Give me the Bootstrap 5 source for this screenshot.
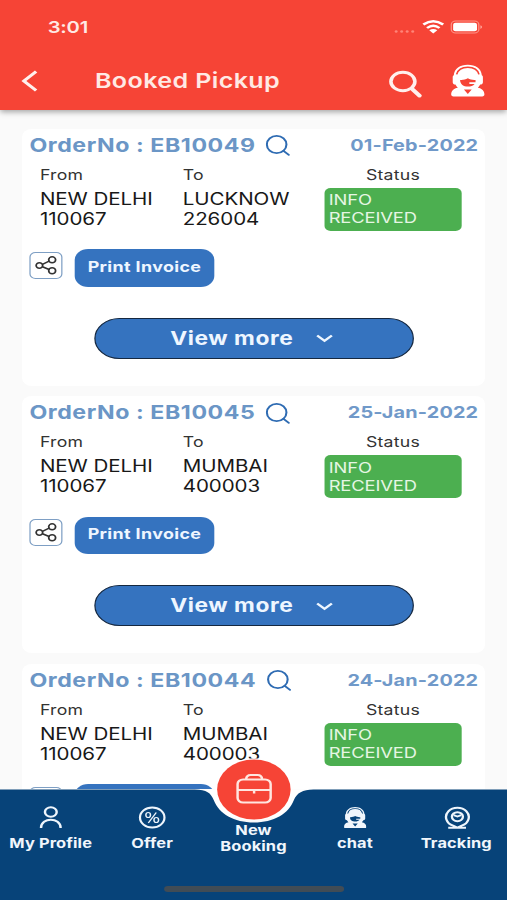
<!DOCTYPE html>
<html lang="en">
<head>
<meta charset="utf-8">
<meta name="viewport" content="width=device-width, initial-scale=1">
<title>Booked Pickup</title>
<link rel="stylesheet" href="https://cdn.jsdelivr.net/npm/bootstrap@5.3.0/dist/css/bootstrap.min.css">
<style>
html, body { height: 900px; overflow: hidden; }
body { font-family: Inter, "Liberation Sans", sans-serif; background: #fafafa; width: 507px; }
/* 414pt-wide layout stretched to the window width */
.phone { width: 414px; height: 900px; transform: scaleX(1.22464); transform-origin: 0 0; background: #fafafa; overflow: hidden; }
.topbar { height: 110px; background: #f64436; color: #ffe9e4; box-shadow: 0 2px 5px rgba(0,0,0,.35); z-index: 2; }
.statusline { height: 54px; padding: 0 19px 0 39px; }
.clock { font-size: 16.5px; font-weight: 600; letter-spacing: -.2px; }
.titleline { height: 56px; padding: 0 18px 0 17px; }
.titletext { font-size: 20.5px; font-weight: 600; margin-left: 45.500px; line-height: 53px; letter-spacing: .3px; }
.orders { padding: 18.5px 18px 0; gap: 10.5px; }
.order { height: 257px; background: #fff; border-radius: 8px; flex: none; }
.order-head { height: 33px; padding: 0 5.5px 0 6px; }
.order-no { font-size: 18.9px; font-weight: 650; color: #6b96c6; letter-spacing: .46px; line-height: 33px; }
.order-lens { margin-left: 8.500px; }
.order-date { font-size: 16.2px; font-weight: 650; color: #7099c9; letter-spacing: .13px; line-height: 33px; }
.route { height: 87.5px; padding-left: 14.6px; color: #181818; }
.from-col { width: 116.6px; }
.to-col { width: 116.2px; }
.stat-col { width: 112px; }
.cap { font-size: 14.4px; line-height: 26px; color: #333; letter-spacing: .2px; }
.place { font-size: 16.8px; line-height: 20px; letter-spacing: -.06px; margin-top: 1px; }
.state { background: #4caf50; color: #e6f6e4; border-radius: 5px; height: 43px; padding: 3.5px 3px 0; font-size: 15px; line-height: 18px; letter-spacing: -.1px; }
.stat-col .cap { margin-left: -1px; }
.actions { padding-left: 6px; gap: 10px; }
.share-btn { width: 27px; height: 27px; margin-top: 2.5px; border: 1px solid #7e9fc4; border-radius: 5px; background: #fff; }
.print-btn { width: 114px; height: 37.5px; border-radius: 11px; background: #3573bf; color: #eef6ff; font-size: 14.6px; font-weight: 700; letter-spacing: .3px; }
.more-btn { width: 261.5px; height: 41px; border: 1.2px solid #152840; border-radius: 21px; background: #3573bf; color: #eef6ff; font-size: 18.6px; font-weight: 700; letter-spacing: .45px; margin: 31px auto 0 58.5px; padding: 1.5px 4px 0 0; }
.more-chevron { margin-left: 18px; }
.tabs { height: 111px; color: #f1f6fc; z-index: 3; }
.tabs-shape { left: 0; top: -32px; }
.tab { width: 20%; font-size: 13.4px; font-weight: 700; letter-spacing: .1px; line-height: 16px; white-space: nowrap; }
.tab svg { display: block; margin: 16px auto 6px; }
.home-line { left: 134px; top: 96.5px; width: 147px; height: 6px; border-radius: 3px; background: #414c55; }
</style>
</head>
<body>
<svg width="0" height="0" class="position-absolute">
  <symbol id="lens" viewBox="0 0 20 24"><g fill="none" stroke="#2f6cb3" stroke-width="1.7" stroke-linecap="round"><ellipse cx="8.900" cy="11.500" rx="8" ry="8.700"/><path d="M14.500 17.800l4.300 4"/></g></symbol>
  <symbol id="share" viewBox="0 0 24 24"><g fill="none" stroke="#333" stroke-width="1.700"><circle cx="5" cy="12" r="3.200"/><circle cx="17.500" cy="5.500" r="3.400"/><circle cx="17.500" cy="18" r="3.400"/><path d="M8 10.700l6.500-3.800M8 13.400l6.500 3.200"/></g></symbol>
  <symbol id="agent" viewBox="0 0 28 34">
    <path fill="currentColor" d="M2.200 11.500C2.600 5 7.500 .8 14 .8s11.400 4.200 11.800 10.700c.9.500.9 1.500.9 2.700v4.500c0 1.500-1 2.300-2.300 2.500-.5 1.200-1.200 2.300-2 3.200C25.800 25.200 28 27.500 28 31.500c0 1.200-.7 1.900-1.900 1.900H1.900C.7 33.400 0 32.700 0 31.500c0-4 2.200-6.300 5.600-7.100-.8-.9-1.500-2-2-3.200-1.300-.2-2.300-1-2.300-2.500v-4.500c0-1.200 0-2.200.9-2.700z"/>
    <path fill="none" stroke="var(--cut)" stroke-width="1.400" d="M4.600 10.800C5.600 5.900 9 3.300 14 3.300s8.400 2.600 9.400 7.500"/>
    <path fill="var(--cut)" d="M7.500 16.500c2.600.2 4.500-.3 6.500-1.700 2 1.400 3.900 1.900 6.500 1.700v2.300h-5.200v1.700h4.400c-1.200 1.900-3.200 2.800-5.700 2.800-3.500 0-6.500-2.300-6.500-6.800zM10.700 26.300h6.600L14 30.800z"/>
  </symbol>
</svg>

<div class="phone d-flex flex-column">
  <header class="topbar flex-shrink-0 position-relative">
    <div class="statusline d-flex align-items-center justify-content-between">
      <span class="clock">3:01</span>
      <svg width="75" height="16" viewBox="0 0 75 16" fill="#fff">
        <g fill="#ff8578"><circle cx="3.500" cy="12.500" r="1.200"/><circle cx="8" cy="12.500" r="1.200"/><circle cx="12.500" cy="12.500" r="1.200"/><circle cx="17" cy="12.500" r="1.200"/></g>
        <g fill="none" stroke="#fff" stroke-width="2.300"><path d="M25.700 5.500q8.100-6.600 16.200 0"/><path d="M28.700 9q5.100-4.400 10.200 0"/></g>
        <path d="M30.500 11.300q3.300-2.600 6.600 0l-3.300 3.200z"/>
        <rect x="48.500" y="2" width="22.500" height="12" rx="3.500" fill="none" stroke="#ff9488"/>
        <rect x="50" y="3.700" width="19.500" height="8.600" rx="2"/><path fill="#ffaca1" d="M72.300 6.300q1.300.5 1.300 1.800t-1.300 1.800z"/>
      </svg>
    </div>
    <div class="titleline d-flex">
      <svg width="15" height="24" viewBox="0 0 15 24" class="mt-3 flex-shrink-0" fill="none" stroke="#fff0ed" stroke-width="2.800"><path d="M12.500 1.500L2.500 11l10 9.500"/></svg>
      <span class="titletext">Booked Pickup</span>
      <svg width="28" height="30" viewBox="0 0 28 30" class="ms-auto flex-shrink-0" style="margin-top:16px;margin-right:23.5px" fill="none" stroke="#fff0ed"><ellipse cx="12" cy="11.500" rx="9.800" ry="9.200" stroke-width="2.900"/><path stroke-width="3.600" stroke-linecap="round" d="M20 19.500l5.600 6.200"/></svg>
      <svg width="28" height="33" style="--cut:#f64436;margin-top:10px" class="flex-shrink-0 text-white"><use href="#agent"/></svg>
    </div>
  </header>

  <main class="orders d-flex flex-column flex-grow-1 overflow-hidden">
    <section class="order">
      <div class="order-head d-flex align-items-center">
        <span class="order-no">OrderNo : EB10049</span><svg width="20" height="24" class="order-lens"><use href="#lens"/></svg>
        <span class="order-date ms-auto">01-Feb-2022</span>
      </div>
      <div class="route d-flex">
        <div class="from-col"><div class="cap">From</div><div class="place">NEW DELHI<br>110067</div></div>
        <div class="to-col"><div class="cap">To</div><div class="place">LUCKNOW<br>226004</div></div>
        <div class="stat-col"><div class="cap text-center">Status</div><div class="state">INFO<br>RECEIVED</div></div>
      </div>
      <div class="actions d-flex">
        <div class="share-btn d-flex align-items-center justify-content-center"><svg width="20" height="21" viewBox="0 0 24 24" preserveAspectRatio="none"><use href="#share" width="24" height="24"/></svg></div>
        <button type="button" class="print-btn btn p-0 border-0">Print Invoice</button>
      </div>
      <button type="button" class="more-btn btn d-flex align-items-center justify-content-center">View more<svg width="14" height="9" viewBox="0 0 14 9" class="more-chevron" fill="none" stroke="currentColor" stroke-width="2.200"><path d="M1 1.500l6 5.300 6-5.300"/></svg></button>
    </section>
    <section class="order">
      <div class="order-head d-flex align-items-center">
        <span class="order-no">OrderNo : EB10045</span><svg width="20" height="24" class="order-lens"><use href="#lens"/></svg>
        <span class="order-date ms-auto">25-Jan-2022</span>
      </div>
      <div class="route d-flex">
        <div class="from-col"><div class="cap">From</div><div class="place">NEW DELHI<br>110067</div></div>
        <div class="to-col"><div class="cap">To</div><div class="place">MUMBAI<br>400003</div></div>
        <div class="stat-col"><div class="cap text-center">Status</div><div class="state">INFO<br>RECEIVED</div></div>
      </div>
      <div class="actions d-flex">
        <div class="share-btn d-flex align-items-center justify-content-center"><svg width="20" height="21" viewBox="0 0 24 24" preserveAspectRatio="none"><use href="#share" width="24" height="24"/></svg></div>
        <button type="button" class="print-btn btn p-0 border-0">Print Invoice</button>
      </div>
      <button type="button" class="more-btn btn d-flex align-items-center justify-content-center">View more<svg width="14" height="9" viewBox="0 0 14 9" class="more-chevron" fill="none" stroke="currentColor" stroke-width="2.200"><path d="M1 1.500l6 5.300 6-5.300"/></svg></button>
    </section>
    <section class="order">
      <div class="order-head d-flex align-items-center">
        <span class="order-no">OrderNo : EB10044</span><svg width="20" height="24" class="order-lens"><use href="#lens"/></svg>
        <span class="order-date ms-auto">24-Jan-2022</span>
      </div>
      <div class="route d-flex">
        <div class="from-col"><div class="cap">From</div><div class="place">NEW DELHI<br>110067</div></div>
        <div class="to-col"><div class="cap">To</div><div class="place">MUMBAI<br>400003</div></div>
        <div class="stat-col"><div class="cap text-center">Status</div><div class="state">INFO<br>RECEIVED</div></div>
      </div>
      <div class="actions d-flex">
        <div class="share-btn"></div>
        <div class="print-btn"></div>
      </div>
    </section>
  </main>

  <nav class="tabs position-relative flex-shrink-0 d-flex text-center">
    <svg class="tabs-shape position-absolute" width="414" height="143" viewBox="0 0 414 143">
      <path fill="#fff" d="M159 32.500h96v28h-96z"/><circle cx="207.300" cy="32.500" r="31.300" fill="#fff"/>
      <path fill="#074379" d="M0 32.500H159C169 32.500 172 36 174.500 43C179 57 191 65.500 207.300 65.500S235.500 57 240 43C242.500 36 247 32.500 256 32.500H414V143H0Z"/>
      <circle cx="207.300" cy="32.500" r="30" fill="#f64436"/>
      <g fill="none" stroke="#ffe6e0" stroke-width="2"><rect x="194" y="22.500" width="27" height="23" rx="4.500"/><path d="M201 22.500q0-4.500 3.800-4.500h5.400q3.800 0 3.800 4.500M194 33h27M207.500 33v3.500"/></g>
    </svg>
    <div class="tab position-relative"><svg width="20" height="24" viewBox="0 0 20 24" fill="none" stroke="#eef5fc" stroke-width="2"><circle cx="10.500" cy="7" r="4.800"/><path d="M2.500 23C2.500 12 18.500 12 18.500 23"/></svg>My Profile</div>
    <div class="tab position-relative"><svg width="26" height="24" viewBox="0 0 26 24" fill="none" stroke="#eef5fc"><circle cx="13.300" cy="12.500" r="10" stroke-width="1.800"/><g stroke-width="1.200"><ellipse cx="10" cy="10" rx="1.900" ry="2.500"/><ellipse cx="16.600" cy="15" rx="1.900" ry="2.500"/><path d="M16.600 7.500l-6.500 10.500"/></g></svg>Offer</div>
    <div class="tab position-relative" style="padding-top:32.5px">New<br>Booking</div>
    <div class="tab position-relative"><svg width="20" height="24" viewBox="0 0 20 24" style="--cut:#074379"><use href="#agent" x="0.500" y="1.500" width="19" height="22"/></svg>chat</div>
    <div class="tab position-relative"><svg width="22" height="24" viewBox="0 0 22 24" fill="none" stroke="#eef5fc" stroke-width="1.900"><path d="M4 22.800h14.500M8 20.600a9.300 9.300 0 1 1 7 0L11.500 22.500z"/><circle cx="11.500" cy="11.700" r="4.500"/><path d="M8.500 10.200l3 1.300 3-1.300"/></svg>Tracking</div>
    <div class="home-line position-absolute"></div>
  </nav>
</div>
<script src="https://cdn.jsdelivr.net/npm/bootstrap@5.3.0/dist/js/bootstrap.bundle.min.js"></script>
</body>
</html>
